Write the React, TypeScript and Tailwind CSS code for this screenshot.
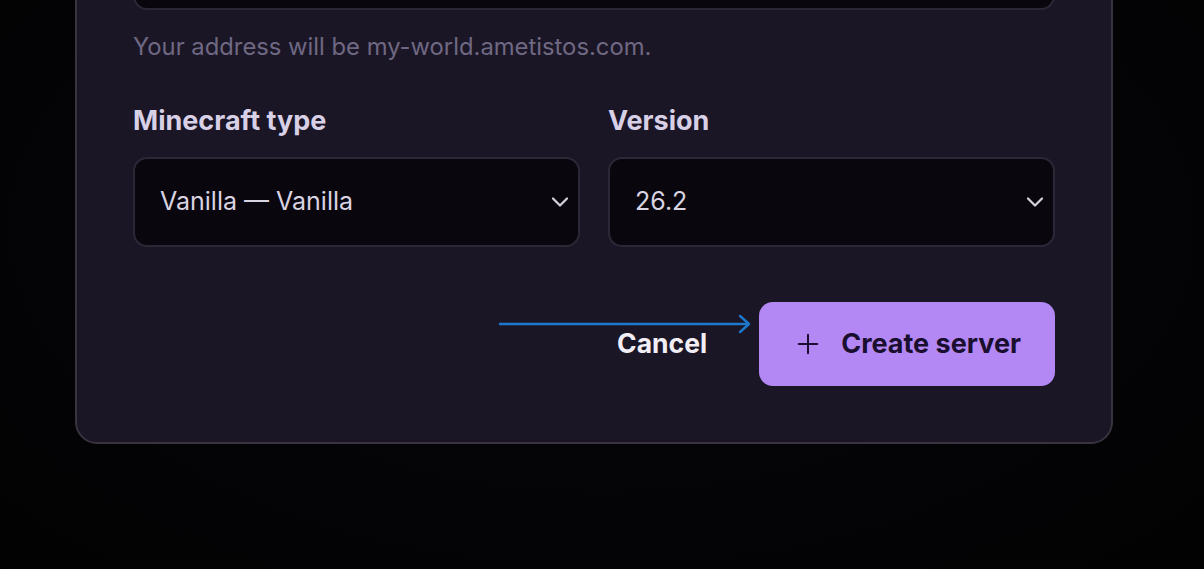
import React from 'react';
import { ChevronDown, Plus } from 'lucide-react';

const font = { fontFamily: 'Inter, "Noto Sans", sans-serif' };

function SelectBox({ value }: { value: string }) {
  return (
    <div className="relative flex h-[90px] items-center rounded-[14px] border-2 border-[#2c2736] bg-[#09070d] pl-[25px] text-[25px] text-[#d9d3e2]">
      <span>{value}</span>
      <ChevronDown className="absolute right-[4px] top-1/2 h-[28px] w-[28px] -translate-y-1/2 text-[#d6d0de]" strokeWidth={1.9} />
    </div>
  );
}

export default function App() {
  return (
    <div
      className="relative h-[569px] w-full overflow-hidden bg-[radial-gradient(ellipse_at_50%_40%,#0a0910_0%,#040406_60%,#020203_100%)]"
      style={font}
    >
      <div className="ml-[75px] mt-[-137px] w-[1038px] rounded-[22px] border-2 border-[#38333f] bg-[#1b1626] px-[56px] pb-[56px] pt-[55px]">
        {/* server name input (scrolled off) */}
        <div className="h-[90px] rounded-[14px] border-2 border-[#2c2736] bg-[#09070d]" />
        <p className="mt-[22px] text-[23.8px] leading-[30px] text-[#6f6882]">
          Your address will be my-world.ametistos.com.
        </p>

        <div className="mt-[42px] grid grid-cols-2 gap-[28px]">
          <div>
            <label className="block text-[27px] font-bold leading-[34px] text-[#d8d0e6]">Minecraft type</label>
            <div className="mt-[19px]">
              <SelectBox value="Vanilla — Vanilla" />
            </div>
          </div>
          <div>
            <label className="block text-[27px] font-bold leading-[34px] text-[#d8d0e6]">Version</label>
            <div className="mt-[19px]">
              <SelectBox value="26.2" />
            </div>
          </div>
        </div>

        <div className="mt-[55px] flex items-center justify-end gap-[52px]">
          <button className="text-[26.5px] font-bold text-[#f2eef6]">Cancel</button>
          <button className="flex h-[84px] items-center gap-[17px] rounded-[14px] bg-[#b388f5] pl-[33px] pr-[34px] text-[27px] font-bold text-[#1a0f2e]">
            <Plus className="h-[32px] w-[32px]" strokeWidth={1.5} />
            <span>Create server</span>
          </button>
        </div>
      </div>

      {/* annotation arrow */}
      <svg className="absolute left-[498px] top-[313px]" width="256" height="24" viewBox="0 0 256 24" fill="none">
        <path d="M2 11 H250" stroke="#1d78cc" strokeWidth="2.4" strokeLinecap="round" />
        <path d="M242 3 L251 11 L242 19" stroke="#1d78cc" strokeWidth="2.4" strokeLinecap="round" strokeLinejoin="round" />
      </svg>
    </div>
  );
}
